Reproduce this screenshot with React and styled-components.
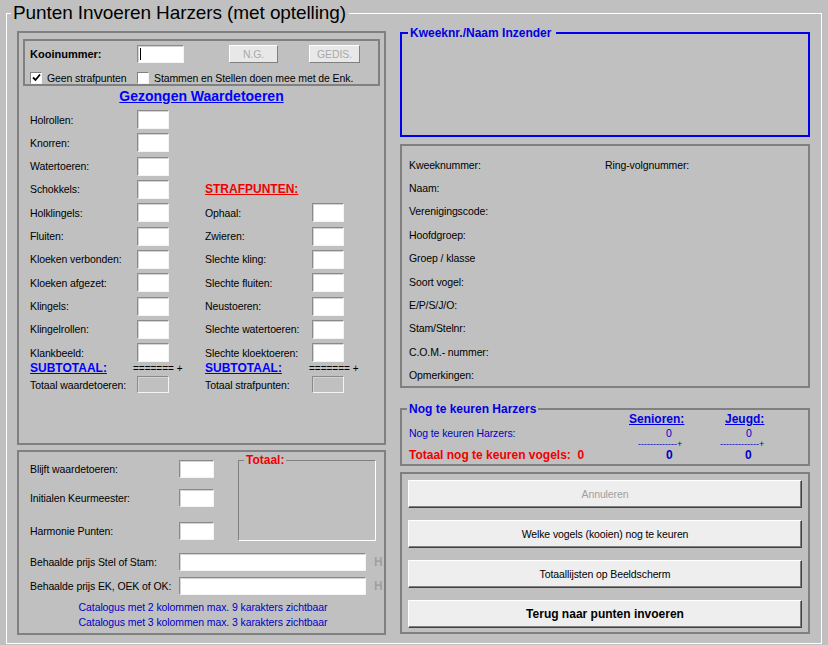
import React from 'react';
import styled, { createGlobalStyle } from 'styled-components';

const GlobalStyle = createGlobalStyle`
  html, body {
    margin: 0;
    padding: 0;
    background: #c0c0c0;
  }
  body {
    font-family: "Liberation Sans", Arial, sans-serif;
    font-size: 10.5px;
    letter-spacing: -0.1px;
    color: #000;
  }
`;

const Page = styled.div`
  width: 828px;
  height: 645px;
  overflow: hidden;
  background: #c0c0c0;
`;

const Frame = styled.fieldset`
  box-sizing: border-box;
  min-width: 0;
  margin: 2px 0 0 6px;
  padding: 0;
  width: 816px;
  height: 642px;
  border: 1px solid #ffffff;
`;

const FrameTitle = styled.legend`
  margin-left: 4px;
  padding: 0 3px 0 2px;
  font-size: 19px;
  letter-spacing: -0.1px;
  line-height: 22px;
`;

const Columns = styled.div`
  display: flex;
  gap: 14px;
  padding: 0 10px;
`;

const LeftCol = styled.div`
  width: 369px;
  margin-top: 7px;
  display: flex;
  flex-direction: column;
`;

const RightCol = styled.div`
  width: 410px;
  margin-top: 2px;
  display: flex;
  flex-direction: column;
`;

const Panel = styled.div`
  box-sizing: border-box;
  border: 2px solid #808080;
  height: ${p => p.$h}px;
  margin-top: ${p => p.$mt || 0}px;
  padding: ${p => p.$pad || '0'};
`;

const Group = styled.fieldset`
  box-sizing: border-box;
  min-width: 0;
  margin: ${p => p.$mt || 0}px 0 0 ${p => p.$ml || 0}px;
  padding: 0;
  width: ${p => (p.$w ? `${p.$w}px` : 'auto')};
  height: ${p => p.$h}px;
  border: ${p => p.$bw || 2}px solid ${p => p.$border || '#808080'};
  ${p => p.$etched && `border-color: #808080 #ffffff #ffffff #808080;`}
`;

const Caption = styled.legend`
  margin-left: ${p => p.$ml || 5}px;
  padding: 0 ${p => p.$pr || 2}px 0 2px;
  font-size: 12px;
  letter-spacing: 0;
  line-height: 14px;
  font-weight: bold;
  color: ${p => p.$color || '#0000e0'};
`;

/* ---- inputs, buttons, checkbox ---- */

const FieldBox = styled.div`
  position: relative;
  box-sizing: border-box;
  width: ${p => p.$w}px;
  height: ${p => p.$h || 19}px;
  background: ${p => (p.$disabled ? '#c0c0c0' : '#ffffff')};
  border: 1px solid;
  border-color: #8a8a8a #f4f4f4 #f4f4f4 #8a8a8a;
  box-shadow: inset 1px 1px 0 #d4d4d4;
  margin-left: ${p => p.$ml || 0}px;
  ${p =>
    p.$caret &&
    `&::after {
      content: "";
      position: absolute;
      left: 2px;
      top: 2px;
      bottom: 2px;
      width: 1px;
      background: #000;
    }`}
`;

const SmallButton = styled.div`
  box-sizing: border-box;
  width: ${p => p.$w}px;
  height: 18px;
  margin-left: ${p => p.$ml || 0}px;
  background: #e8e8e8;
  border: 1px solid;
  border-color: #ffffff #808080 #808080 #ffffff;
  color: #a8a8a8;
  display: flex;
  align-items: center;
  justify-content: center;
`;

const CheckBox = styled.span`
  box-sizing: border-box;
  display: inline-flex;
  align-items: center;
  justify-content: center;
  width: 12px;
  height: 12px;
  background: #fff;
  border: 1px solid;
  border-color: #808080 #f4f4f4 #f4f4f4 #808080;
  margin-right: 5px;
`;

const Check = ({ checked }) => (
  <CheckBox>
    {checked && (
      <svg width="9" height="9" viewBox="0 0 9 9">
        <path d="M1 4.5 L3.5 7 L8 1.5" fill="none" stroke="#000" strokeWidth="1.8" />
      </svg>
    )}
  </CheckBox>
);

/* ---- left panel 1 ---- */

const KooiBox = styled.div`
  box-sizing: border-box;
  border: 2px solid #808080;
  height: 47px;
  padding: 4px 0 0 5px;
`;

const KooiRow = styled.div`
  display: flex;
  align-items: center;
  height: 18px;
`;

const BoldLabel = styled.span`
  width: ${p => p.$w || 107}px;
  font-weight: bold;
  font-size: 11px;
  letter-spacing: 0;
`;

const CheckRow = styled.div`
  display: grid;
  grid-template-columns: 107px 1fr;
  margin-top: 8px;
  height: 13px;
  align-items: center;
`;

const CheckItem = styled.label`
  display: flex;
  align-items: center;
  white-space: nowrap;
`;

const Heading = styled.div`
  text-align: ${p => p.$align || 'left'};
  font-weight: bold;
  font-size: ${p => p.$size || 12}px;
  letter-spacing: 0;
  line-height: ${p => p.$lh || 16}px;
  color: ${p => p.$color || '#0000ff'};
  text-decoration: ${p => (p.$underline ? 'underline' : 'none')};
  margin-top: ${p => p.$mt || 0}px;
  white-space: nowrap;
`;

const ScoreGrid = styled.div`
  display: grid;
  grid-template-columns: 107px 32px 36px 107px 32px;
  grid-auto-rows: 19px;
  row-gap: 4.33px;
  align-items: center;
  padding-left: 7px;
  margin-top: 6px;
`;

const Label = styled.span`
  white-space: nowrap;
  color: ${p => p.$color || '#000'};
`;

const SubGrid = styled.div`
  display: grid;
  grid-template-columns: 107px 32px 36px 107px 32px;
  align-items: center;
  padding-left: 7px;
  height: ${p => p.$h}px;
  margin-top: ${p => p.$mt || 0}px;
`;

const Equals = styled.span`
  font-size: 10px;
  letter-spacing: 0;
  white-space: nowrap;
  margin-left: ${p => p.$ml}px;
`;

const Cell = styled.div`
  grid-column: ${p => p.$col};
  display: flex;
  align-items: center;
`;

/* ---- left panel 2 ---- */

const TopSection = styled.div`
  display: flex;
  align-items: flex-start;
`;

const SmallFields = styled.div`
  display: flex;
  flex-direction: column;
`;

const FieldRow = styled.div`
  display: grid;
  grid-template-columns: ${p => p.$cols};
  align-items: center;
  margin-top: ${p => p.$mt || 0}px;
`;

const HMark = styled.span`
  color: #a0a0a0;
  font-weight: bold;
  font-size: 12px;
  letter-spacing: 0;
  margin-left: 8px;
`;

const Note = styled.div`
  color: #0000c8;
  text-align: center;
  line-height: 15px;
  padding-right: 2px;
  margin-top: 5px;
`;

/* ---- right column ---- */

const InfoGrid = styled.div`
  display: grid;
  grid-template-columns: 196px 1fr;
  grid-auto-rows: 23.4px;
  align-items: center;
  padding: 7px 0 0 7px;
`;

const WideLabel = styled(Label)`
  grid-column: 1 / span 2;
`;

const TallyGrid = styled.div`
  display: grid;
  grid-template-columns: 220px 96px 1fr;
  padding-left: 7px;
  margin-top: -4px;
`;

const TallyCell = styled.div`
  line-height: ${p => p.$lh}px;
  height: ${p => p.$lh}px;
  padding-left: ${p => p.$pl || 0}px;
  margin-left: ${p => p.$ml || 0}px;
  color: ${p => p.$color || '#0000c8'};
  font-weight: ${p => (p.$bold ? 'bold' : 'normal')};
  font-size: ${p => p.$size || 10.5}px;
  letter-spacing: ${p => (p.$bold || p.$size < 10 ? 0 : -0.1)}px;
  text-decoration: ${p => (p.$underline ? 'underline' : 'none')};
  white-space: nowrap;
`;

const ButtonStack = styled.div`
  display: flex;
  flex-direction: column;
  gap: 12px;
  padding: 6px 6px 0 6px;
`;

const WinButton = styled.div`
  box-sizing: border-box;
  height: 28px;
  background: #eeeeee;
  border: 1px solid;
  border-color: #ffffff #404040 #404040 #ffffff;
  box-shadow: inset -1px -1px 0 #808080;
  display: flex;
  align-items: center;
  justify-content: center;
  font-size: ${p => (p.$bold ? 12 : 10.5)}px;
  letter-spacing: ${p => (p.$bold ? 0 : -0.1)}px;
  font-weight: ${p => (p.$bold ? 'bold' : 'normal')};
  color: ${p => (p.$disabled ? '#a0a0a0' : '#000')};
`;

const waardeRows = [
  'Holrollen:', 'Knorren:', 'Watertoeren:', 'Schokkels:', 'Holklingels:', 'Fluiten:',
  'Kloeken verbonden:', 'Kloeken afgezet:', 'Klingels:', 'Klingelrollen:', 'Klankbeeld:',
];

const strafRows = [
  'Ophaal:', 'Zwieren:', 'Slechte kling:', 'Slechte fluiten:', 'Neustoeren:',
  'Slechte watertoeren:', 'Slechte kloektoeren:',
];

const infoRows = [
  'Naam:', 'Verenigingscode:', 'Hoofdgroep:', 'Groep / klasse', 'Soort vogel:',
  'E/P/S/J/O:', 'Stam/Stelnr:', 'C.O.M.- nummer:', 'Opmerkingen:',
];

const App = () => {
  const scoreCells = [];
  waardeRows.forEach((name, i) => {
    scoreCells.push(<Cell key={`l${i}`} $col="1"><Label>{name}</Label></Cell>);
    scoreCells.push(<Cell key={`i${i}`} $col="2"><FieldBox $w={32} /></Cell>);
    if (i === 3) {
      scoreCells.push(
        <Cell key="sh" $col="4 / span 2">
          <Heading $color="#f00000" $underline $size={12}>STRAFPUNTEN:</Heading>
        </Cell>
      );
    }
    if (i >= 4) {
      scoreCells.push(<Cell key={`sl${i}`} $col="4"><Label>{strafRows[i - 4]}</Label></Cell>);
      scoreCells.push(<Cell key={`si${i}`} $col="5"><FieldBox $w={32} /></Cell>);
    }
  });

  return (
    <Page>
      <GlobalStyle />
      <Frame>
        <FrameTitle>Punten Invoeren Harzers (met optelling)</FrameTitle>
        <Columns>
          <LeftCol>
            <Panel $h={414} $pad="6px 4px 0 4px">
              <KooiBox>
                <KooiRow>
                  <BoldLabel>Kooinummer:</BoldLabel>
                  <FieldBox $w={47} $h={18} $caret />
                  <SmallButton $w={49} $ml={45}>N.G.</SmallButton>
                  <SmallButton $w={51} $ml={31}>GEDIS.</SmallButton>
                </KooiRow>
                <CheckRow>
                  <CheckItem><Check checked />Geen strafpunten</CheckItem>
                  <CheckItem><Check />Stammen en Stellen doen mee met de Enk.</CheckItem>
                </CheckRow>
              </KooiBox>
              <Heading $align="center" $size={14} $underline $mt={2}>Gezongen Waardetoeren</Heading>
              <ScoreGrid>{scoreCells}</ScoreGrid>
              <SubGrid $h={13}>
                <Cell $col="1"><Heading $underline $lh={13}>SUBTOTAAL:</Heading></Cell>
                <Cell $col="2"><Equals $ml={-4}>======= +</Equals></Cell>
                <Cell $col="4"><Heading $underline $lh={13}>SUBTOTAAL:</Heading></Cell>
                <Cell $col="5"><Equals $ml={-3}>======= +</Equals></Cell>
              </SubGrid>
              <SubGrid $h={17} $mt={1}>
                <Cell $col="1"><Label>Totaal waardetoeren:</Label></Cell>
                <Cell $col="2"><FieldBox $w={32} $h={17} $disabled /></Cell>
                <Cell $col="4"><Label>Totaal strafpunten:</Label></Cell>
                <Cell $col="5"><FieldBox $w={32} $h={17} $disabled /></Cell>
              </SubGrid>
            </Panel>

            <Panel $h={185} $mt={5} $pad="8px 6px 0 11px">
              <TopSection>
                <SmallFields>
                  <FieldRow $cols="149px 35px">
                    <Label>Blijft waardetoeren:</Label>
                    <FieldBox $w={35} $h={18} />
                  </FieldRow>
                  <FieldRow $cols="149px 35px" $mt={11}>
                    <Label>Initialen Keurmeester:</Label>
                    <FieldBox $w={35} $h={18} />
                  </FieldRow>
                  <FieldRow $cols="149px 35px" $mt={15}>
                    <Label>Harmonie Punten:</Label>
                    <FieldBox $w={35} $h={18} />
                  </FieldRow>
                </SmallFields>
                <Group $w={138} $h={88} $ml={24} $mt={-7} $bw={1} $etched>
                  <Caption $color="#f00000">Totaal:</Caption>
                </Group>
              </TopSection>
              <FieldRow $cols="149px 187px auto" $mt={12}>
                <Label>Behaalde prijs Stel of Stam:</Label>
                <FieldBox $w={187} $h={18} />
                <HMark>H</HMark>
              </FieldRow>
              <FieldRow $cols="149px 187px auto" $mt={6}>
                <Label>Behaalde prijs EK, OEK of OK:</Label>
                <FieldBox $w={187} $h={18} />
                <HMark>H</HMark>
              </FieldRow>
              <Note>
                Catalogus met 2 kolommen max. 9 karakters zichtbaar
                <br />
                Catalogus met 3 kolommen max. 3 karakters zichtbaar
              </Note>
            </Panel>
          </LeftCol>

          <RightCol>
            <Group $h={111} $border="#0000f0">
              <Caption $ml={6} $pr={5}>Kweeknr./Naam Inzender</Caption>
            </Group>

            <Panel $h={244} $mt={7}>
              <InfoGrid>
                <Label>Kweeknummer:</Label>
                <Label>Ring-volgnummer:</Label>
                {infoRows.map(r => (
                  <WideLabel key={r}>{r}</WideLabel>
                ))}
              </InfoGrid>
            </Panel>

            <Group $h={64} $mt={14}>
              <Caption>Nog te keuren Harzers</Caption>
              <TallyGrid>
                <TallyCell $lh={14} />
                <TallyCell $lh={14} $bold $underline $size={12} $color="#0000e0">Senioren:</TallyCell>
                <TallyCell $lh={14} $bold $underline $size={12} $color="#0000e0">Jeugd:</TallyCell>

                <TallyCell $lh={14}>Nog te keuren Harzers:</TallyCell>
                <TallyCell $lh={14} $pl={37}>0</TallyCell>
                <TallyCell $lh={14} $pl={21}>0</TallyCell>

                <TallyCell $lh={9} />
                <TallyCell $lh={9} $pl={9} $size={9}>-------------+</TallyCell>
                <TallyCell $lh={9} $ml={-5} $size={9}>-------------+</TallyCell>

                <TallyCell $lh={12} $bold $size={12} $color="#f00000">
                  Totaal nog te keuren vogels:&nbsp;&nbsp;0
                </TallyCell>
                <TallyCell $lh={12} $pl={37} $bold $size={12}>0</TallyCell>
                <TallyCell $lh={12} $pl={20} $bold $size={12}>0</TallyCell>
              </TallyGrid>
            </Group>

            <Panel $h={162} $mt={6}>
              <ButtonStack>
                <WinButton $disabled>Annuleren</WinButton>
                <WinButton>Welke vogels (kooien) nog te keuren</WinButton>
                <WinButton>Totaallijsten op Beeldscherm</WinButton>
                <WinButton $bold>Terug naar punten invoeren</WinButton>
              </ButtonStack>
            </Panel>
          </RightCol>
        </Columns>
      </Frame>
    </Page>
  );
};

export default App;
